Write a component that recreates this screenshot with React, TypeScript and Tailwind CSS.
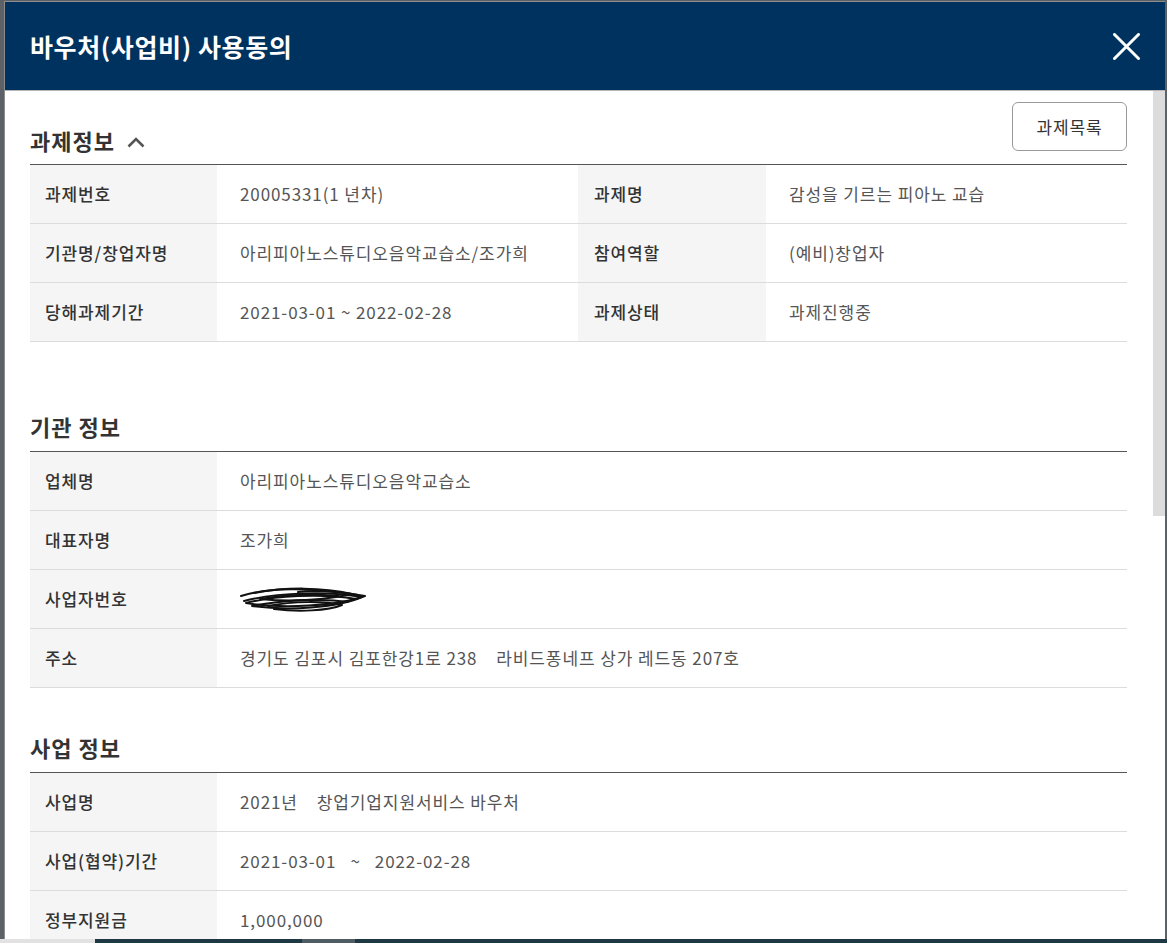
import { Fragment, ReactNode } from "react";

type Pair = { label: string; value: ReactNode };

const taskRows: [Pair, Pair][] = [
	[
		{ label: "과제번호", value: "20005331(1 년차)" },
		{ label: "과제명", value: "감성을 기르는 피아노 교습" },
	],
	[
		{ label: "기관명/창업자명", value: "아리피아노스튜디오음악교습소/조가희" },
		{ label: "참여역할", value: "(예비)창업자" },
	],
	[
		{ label: "당해과제기간", value: "2021-03-01 ~ 2022-02-28" },
		{ label: "과제상태", value: "과제진행중" },
	],
];

function Scribble() {
	return (
		<svg width="130" height="30" viewBox="0 0 130 30" className="absolute left-[-2px] top-[-5px]" aria-hidden>
			<g fill="none" stroke="#111" strokeWidth="2" strokeLinecap="round" strokeLinejoin="round">
				<path d="M3 12 C28 4, 70 2, 127 12 C100 22, 44 25, 8 19 C36 12, 82 9, 118 15" />
				<path d="M6 17 C40 8, 92 7, 124 13 C98 24, 50 27, 14 22 C44 16, 84 14, 110 18" />
				<path d="M16 9 C48 3, 84 3, 114 10 C86 16, 52 18, 22 15 C50 10, 78 10, 100 12" />
				<path d="M30 22 C56 17, 86 17, 104 21 C90 27, 60 28, 36 25" />
				<path d="M60 8 C74 6, 96 7, 120 11" />
			</g>
		</svg>
	);
}

const orgRows: Pair[] = [
	{ label: "업체명", value: "아리피아노스튜디오음악교습소" },
	{ label: "대표자명", value: "조가희" },
	{
		label: "사업자번호",
		value: (
			<span className="relative inline-block h-[20px] w-[126px]">
				<Scribble />
			</span>
		),
	},
	{ label: "주소", value: <span className="whitespace-pre">{"경기도 김포시 김포한강1로 238    라비드퐁네프 상가 레드동 207호"}</span> },
];

const bizRows: Pair[] = [
	{ label: "사업명", value: <span className="whitespace-pre">{"2021년    창업기업지원서비스 바우처"}</span> },
	{ label: "사업(협약)기간", value: <span className="whitespace-pre">{"2021-03-01   ~   2022-02-28"}</span> },
	{ label: "정부지원금", value: "1,000,000" },
];

function Label({ children, pl = "pl-[15px]" }: { children: ReactNode; pl?: string }) {
	return (
		<div
			className={`flex h-[59px] items-center border-b border-[#dcdcdc] bg-[#f5f5f5] ${pl} text-[17px] font-medium tracking-[0.9px] text-[#333]`}
		>
			{children}
		</div>
	);
}

function Value({ children }: { children: ReactNode }) {
	return (
		<div className="flex h-[59px] items-center border-b border-[#dcdcdc] pl-[23px] text-[17px] tracking-[0.9px] text-[#555]">
			{children}
		</div>
	);
}

function SectionTitle({ children }: { children: ReactNode }) {
	return <h2 className="text-[22px] font-bold leading-[30px] tracking-[1px] text-[#333]">{children}</h2>;
}

export default function App() {
	return (
		<div
			className="flex h-[943px] w-[1167px] flex-col overflow-hidden bg-[#5b6166]"
			style={{ fontFamily: '"Noto Sans CJK KR", "Noto Sans", sans-serif' }}
		>
			<div className="flex min-h-0 flex-1 pl-[4px] pr-[2px] pt-[1px]">
				<div className="flex w-full flex-col border-l border-t border-[#8c8c8c] bg-white">
					{/* header */}
					<div className="flex h-[89px] shrink-0 items-center justify-between border-b border-[#b5b5b5] bg-[#00325f] pl-[25px] pr-[25px]">
						<h1 className="pt-[2px] text-[25px] font-bold tracking-[0.6px] text-white">바우처(사업비) 사용동의</h1>
						<button type="button" aria-label="닫기" className="flex h-[27px] w-[27px] items-center justify-center">
							<svg width="27" height="27" viewBox="0 0 27 27">
								<path d="M1.5 1.5 L25.5 25.5 M25.5 1.5 L1.5 25.5" stroke="white" strokeWidth="3" strokeLinecap="round" />
							</svg>
						</button>
					</div>

					{/* body */}
					<div className="flex min-h-0 flex-1 overflow-hidden">
						<div className="min-w-0 flex-1 pl-[25px] pr-[26px] pt-[11px]">
							<div className="flex items-end justify-between">
								<div className="-mb-[4px] flex items-center gap-[12px]">
									<SectionTitle>과제정보</SectionTitle>
									<svg width="18" height="12" viewBox="0 0 18 12" className="mt-[3px]">
										<polyline points="1.5,10.5 9,3 16.5,10.5" fill="none" stroke="#555" strokeWidth="2.6" />
									</svg>
								</div>
								<button
									type="button"
									className="h-[49px] w-[115px] rounded-[6px] border border-[#999] bg-white text-[17px] tracking-[0.9px] text-[#333]"
								>
									과제목록
								</button>
							</div>
							<div className="mt-[13px] grid grid-cols-[187px_361px_188px_1fr] border-t border-[#555]">
								{taskRows.map(([a, b]) => (
									<Fragment key={a.label}>
										<Label>{a.label}</Label>
										<Value>{a.value}</Value>
										<Label pl="pl-[16px]">{b.label}</Label>
										<Value>{b.value}</Value>
									</Fragment>
								))}
							</div>

							<div className="mt-[69px]">
								<SectionTitle>기관 정보</SectionTitle>
							</div>
							<div className="mt-[10px] grid grid-cols-[187px_1fr] border-t border-[#555]">
								{orgRows.map((r) => (
									<Fragment key={r.label}>
										<Label>{r.label}</Label>
										<Value>{r.value}</Value>
									</Fragment>
								))}
							</div>

							<div className="mt-[44px]">
								<SectionTitle>사업 정보</SectionTitle>
							</div>
							<div className="mt-[10px] grid grid-cols-[187px_1fr] border-t border-[#555]">
								{bizRows.map((r) => (
									<Fragment key={r.label}>
										<Label>{r.label}</Label>
										<Value>{r.value}</Value>
									</Fragment>
								))}
							</div>
						</div>

						{/* scrollbar */}
						<div className="w-[12px] shrink-0">
							<div className="h-[425px] bg-[#dcdcdc]" />
						</div>
					</div>
				</div>
			</div>
			<div className="flex h-[4px] shrink-0">
				<div className="w-[95px] bg-[#e2e2e2]" />
				<div className="w-[207px] bg-[#1f3944]" />
				<div className="w-[53px] bg-[#4e5d63]" />
				<div className="flex-1 bg-[#1f3944]" />
			</div>
		</div>
	);
}
